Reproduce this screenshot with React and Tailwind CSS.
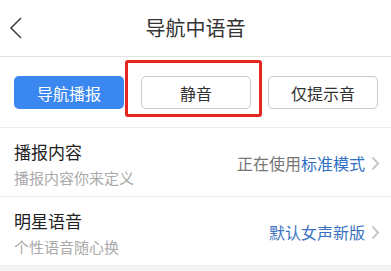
const font = { fontFamily: '"Noto Sans CJK SC", "Noto Sans", sans-serif' }

function Chevron() {
  return (
    <svg width="9" height="15" viewBox="0 0 9 15" className="ml-[6px]">
      <polyline points="1.5,1.5 7,7.5 1.5,13.5" fill="none" stroke="#c8c8c8" strokeWidth="2" />
    </svg>
  )
}

function Row({ title, sub, children }) {
  return (
    <div className="flex h-[69px] items-center justify-between border-b border-[#ececec] bg-white pl-[14px] pr-[11px]">
      <div className="flex flex-col pt-[3px]">
        <span className="text-[17px] leading-[24px] text-[#222]">{title}</span>
        <span className="mt-[4px] text-[15px] leading-[20px] text-[#aaa]">{sub}</span>
      </div>
      <div className="flex items-center pt-[2px] text-[16px]">
        {children}
        <Chevron />
      </div>
    </div>
  )
}

export default function App() {
  return (
    <div className="h-[271px] w-[391px] overflow-hidden bg-[#f3f3f3]" style={font}>
      <div className="relative flex h-[57px] items-center justify-center border-b border-[#e3e3e3] bg-white">
        <svg width="14" height="22" viewBox="0 0 14 22" className="absolute left-[9px] top-[17px]">
          <polyline points="12,1 2,11 12,21" fill="none" stroke="#444" strokeWidth="1.6" />
        </svg>
        <span className="text-[20px] text-[#333]">导航中语音</span>
      </div>

      <div className="flex h-[71px] items-start gap-[17px] border-b border-[#ececec] bg-white pl-[14px] pt-[19px]">
        <button className="h-[33px] w-[110px] rounded-[5px] bg-[#3a87ef] text-[16px] text-white">导航播报</button>
        <div className="relative">
          <button className="h-[33px] w-[110px] rounded-[5px] border border-[#c9c9c9] bg-white text-[16px] text-[#333]">静音</button>
          <div className="pointer-events-none absolute -bottom-[8px] -left-[16px] -right-[11px] -top-[16px] rounded-[3px] border-[3px] border-[#e3261f]" />
        </div>
        <button className="h-[33px] w-[110px] rounded-[5px] border border-[#c9c9c9] bg-white text-[16px] text-[#333]">仅提示音</button>
      </div>

      <Row title="播报内容" sub="播报内容你来定义">
        <span className="text-[#777]">正在使用</span>
        <span className="text-[#2f6fc4]">标准模式</span>
      </Row>
      <Row title="明星语音" sub="个性语音随心换">
        <span className="text-[#3b72c0]">默认女声新版</span>
      </Row>
    </div>
  )
}
